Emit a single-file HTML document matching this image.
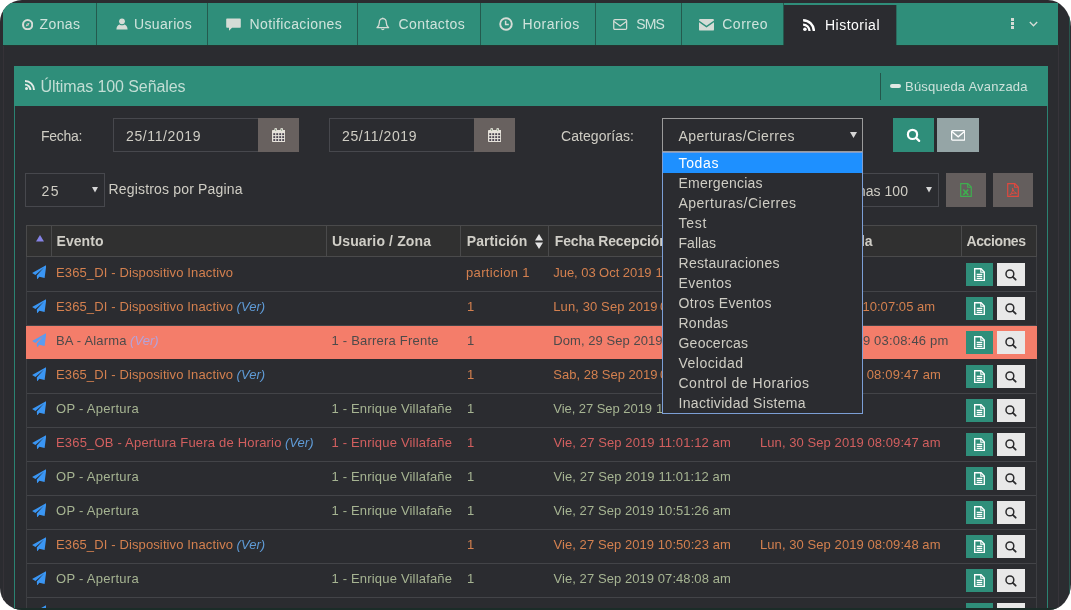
<!DOCTYPE html>
<html><head><meta charset="utf-8"><title>Historial</title>
<style>
html,body{margin:0;padding:0;background:#fff;}
body{width:1071px;height:610px;overflow:hidden;position:relative;font-family:"Liberation Sans",sans-serif;}
#f{position:absolute;left:0;top:0;width:1071px;height:610px;background:#2b2c30;border-radius:22px 23px 22px 22px / 22px 27px 26px 22px;overflow:hidden;will-change:transform;}
.r{position:absolute;display:block;}
.t{position:absolute;white-space:pre;line-height:normal;}
</style></head><body><div id="f">
<div class="r" style="left:3px;top:45px;width:1px;height:565px;background:#353237;"></div>
<div class="r" style="left:1058px;top:45px;width:1px;height:565px;background:#37343a;"></div>
<div class="r" style="left:1069px;top:0px;width:1px;height:610px;background:#27564d;"></div>
<div class="r" style="left:3px;top:3px;width:1055px;height:42px;background:#2f8e7a;"></div>
<div class="r" style="left:3px;top:45px;width:1055px;height:1px;background:#24352f;"></div>
<div class="r" style="left:96px;top:3px;width:1px;height:42px;background:#245a4e;"></div>
<div class="r" style="left:207px;top:3px;width:1px;height:42px;background:#245a4e;"></div>
<div class="r" style="left:357px;top:3px;width:1px;height:42px;background:#245a4e;"></div>
<div class="r" style="left:480px;top:3px;width:1px;height:42px;background:#245a4e;"></div>
<div class="r" style="left:595px;top:3px;width:1px;height:42px;background:#245a4e;"></div>
<div class="r" style="left:681px;top:3px;width:1px;height:42px;background:#245a4e;"></div>
<div class="r" style="left:783px;top:3px;width:1px;height:42px;background:#245a4e;"></div>
<div class="r" style="left:784px;top:5px;width:112px;height:41px;background:#2b2c30;"></div>
<div class="r" style="left:896px;top:5px;width:1px;height:40px;background:#2b6b5e;"></div>
<svg class="r" style="left:22px;top:18.7px;" width="11.3" height="11.3" viewBox="0 0 11 11"><circle cx="5.5" cy="5.5" r="4.5" fill="none" stroke="#d6dcd6" stroke-width="2"/><path d="M7.4 3.6 L6.3 6.3 L3.6 7.4 L4.7 4.7 Z" fill="#d6dcd6"/><circle cx="5.5" cy="5.5" r="0.7" fill="#c98a8a"/></svg>
<span class="t" style="left:39.50px;top:16px;font-size:14px;color:#cfe3dc;letter-spacing:0.398px;">Zonas</span>
<svg class="r" style="left:115.5px;top:18px;" width="12" height="12" viewBox="0 0 12 12"><circle cx="6" cy="3.3" r="2.9" fill="#d6dcd6"/><path d="M0.4 11.6 C0.4 8.2 2.2 6.6 3.6 6.4 C4.4 7 5.2 7.3 6 7.3 C6.8 7.3 7.6 7 8.4 6.4 C9.8 6.6 11.6 8.2 11.6 11.6 Z" fill="#d6dcd6"/></svg>
<span class="t" style="left:134.00px;top:16px;font-size:14px;color:#cfe3dc;letter-spacing:0.358px;">Usuarios</span>
<svg class="r" style="left:226px;top:18px;" width="15" height="14" viewBox="0 0 15 14"><path d="M1 0.5 H14 A0.8 0.8 0 0 1 14.8 1.3 V9 A0.8 0.8 0 0 1 14 9.8 H6 L3 12.8 V9.8 H1 A0.8 0.8 0 0 1 0.2 9 V1.3 A0.8 0.8 0 0 1 1 0.5 Z" fill="#d6dcd6"/></svg>
<span class="t" style="left:249.50px;top:16px;font-size:14px;color:#cfe3dc;letter-spacing:0.392px;">Notificaciones</span>
<svg class="r" style="left:376.2px;top:17px;" width="13.6" height="14.4" viewBox="0 0 14 14"><path d="M7 1.2 C4.6 1.2 3.4 3 3.4 5.4 C3.4 8.4 2.2 9.6 1 10.6 H13 C11.8 9.6 10.6 8.4 10.6 5.4 C10.6 3 9.4 1.2 7 1.2 Z" fill="none" stroke="#d6dcd6" stroke-width="1.3" stroke-linejoin="round"/><path d="M5.6 11.6 A1.5 1.5 0 0 0 8.4 11.6" fill="none" stroke="#d6dcd6" stroke-width="1.2"/><circle cx="7" cy="0.9" r="0.8" fill="#d6dcd6"/></svg>
<span class="t" style="left:398.50px;top:16px;font-size:14px;color:#cfe3dc;letter-spacing:0.402px;">Contactos</span>
<svg class="r" style="left:499px;top:17px;" width="14" height="14" viewBox="0 0 14 14"><circle cx="7" cy="7" r="5.8" fill="none" stroke="#d6dcd6" stroke-width="1.9"/><path d="M6.6 3.8 V7.6 H9.8" fill="none" stroke="#d6dcd6" stroke-width="1.5"/></svg>
<span class="t" style="left:522.50px;top:16px;font-size:14px;color:#cfe3dc;letter-spacing:0.549px;">Horarios</span>
<svg class="r" style="left:613.2px;top:19.3px;" width="14.4" height="11.4" viewBox="0 0 15 12"><rect x="0.7" y="0.7" width="13.6" height="10.2" rx="1.2" fill="none" stroke="#d6dcd6" stroke-width="1.3"/><path d="M1 2.6 L7.5 7.4 L14 2.6" fill="none" stroke="#d6dcd6" stroke-width="1.3"/></svg>
<span class="t" style="left:636.25px;top:16px;font-size:14px;color:#cfe3dc;letter-spacing:-0.919px;">SMS</span>
<svg class="r" style="left:699px;top:19px;" width="15" height="11.6" viewBox="0 0 15 11.6"><path d="M0 1.2 A1.2 1.2 0 0 1 1.2 0 H13.8 A1.2 1.2 0 0 1 15 1.2 V1.6 L7.5 6.8 L0 1.6 Z" fill="#d6dcd6"/><path d="M0 3.2 L7.5 8.4 L15 3.2 V10.4 A1.2 1.2 0 0 1 13.8 11.6 H1.2 A1.2 1.2 0 0 1 0 10.4 Z" fill="#d6dcd6"/></svg>
<span class="t" style="left:722.25px;top:16px;font-size:14px;color:#cfe3dc;letter-spacing:0.491px;">Correo</span>
<svg class="r" style="left:802.8px;top:18.6px;" width="12.2" height="12" viewBox="0 0 12 12"><circle cx="1.8" cy="10.2" r="1.8" fill="#ffffff"/><path d="M0 4.4 A7.6 7.6 0 0 1 7.6 12 H5.3 A5.3 5.3 0 0 0 0 6.7 Z" fill="#ffffff"/><path d="M0 0 A12 12 0 0 1 12 12 H9.6 A9.6 9.6 0 0 0 0 2.4 Z" fill="#ffffff"/></svg>
<span class="t" style="left:825.00px;top:17px;font-size:14px;color:#ffffff;letter-spacing:0.492px;">Historial</span>
<div class="r" style="left:1010.5px;top:18px;width:3px;height:3px;background:#d6dcd6;"></div>
<div class="r" style="left:1010.5px;top:22px;width:3px;height:3px;background:#d6dcd6;"></div>
<div class="r" style="left:1010.5px;top:26px;width:3px;height:3px;background:#d6dcd6;"></div>
<svg class="r" style="left:1029px;top:21px;" width="9" height="7" viewBox="0 0 9 7"><path d="M0.8 1 L4.5 4.8 L8.2 1" fill="none" stroke="#d6dcd6" stroke-width="1.3"/></svg>
<div class="r" style="left:14px;top:66px;width:1034px;height:40px;background:#2f8e7a;"></div>
<div class="r" style="left:14px;top:106px;width:1px;height:504px;background:#2b8372;"></div>
<div class="r" style="left:1047px;top:106px;width:1px;height:504px;background:#2b8372;"></div>
<svg class="r" style="left:25px;top:80px;" width="10" height="10" viewBox="0 0 12 12"><circle cx="1.8" cy="10.2" r="1.8" fill="#e3ebe6"/><path d="M0 4.4 A7.6 7.6 0 0 1 7.6 12 H5.3 A5.3 5.3 0 0 0 0 6.7 Z" fill="#e3ebe6"/><path d="M0 0 A12 12 0 0 1 12 12 H9.6 A9.6 9.6 0 0 0 0 2.4 Z" fill="#e3ebe6"/></svg>
<span class="t" style="left:40.50px;top:78px;font-size:16px;color:#c3ded5;letter-spacing:-0.097px;">Últimas 100 Señales</span>
<div class="r" style="left:880px;top:73px;width:1px;height:27px;background:#24564b;"></div>
<div class="r" style="left:890px;top:84px;width:11px;height:3.5px;background:#dfe8e3;border-radius:2px;"></div>
<span class="t" style="left:905.00px;top:79px;font-size:13px;color:#cde2db;letter-spacing:0.217px;">Búsqueda Avanzada</span>
<span class="t" style="left:41.00px;top:128px;font-size:14px;color:#cfcdc4;letter-spacing:-0.260px;">Fecha:</span>
<div class="r" style="left:113px;top:118px;width:146px;height:34px;background:#2b2c30;box-sizing:border-box;border:1px solid #47484d;"></div>
<span class="t" style="left:126.00px;top:128px;font-size:14px;color:#cfcdc4;letter-spacing:0.608px;">25/11/2019</span>
<div class="r" style="left:258px;top:118px;width:41px;height:34px;background:#68615f;"></div>
<svg class="r" style="left:271.8px;top:128px;" width="13.4" height="14" viewBox="0 0 13.4 14"><rect x="0" y="2" width="13.4" height="12" rx="0.8" fill="#e6e2da"/><rect x="2.4" y="0" width="2.6" height="3.6" rx="0.9" fill="#e6e2da"/><rect x="8.4" y="0" width="2.6" height="3.6" rx="0.9" fill="#e6e2da"/><rect x="3.3" y="0.8" width="0.8" height="2.2" fill="#7f9a7f"/><rect x="9.3" y="0.8" width="0.8" height="2.2" fill="#7f9a7f"/><rect x="1.30" y="5.20" width="1.9" height="1.9" fill="#4a4550"/><rect x="1.30" y="8.15" width="1.9" height="1.9" fill="#4a4550"/><rect x="1.30" y="11.10" width="1.9" height="1.9" fill="#4a4550"/><rect x="4.27" y="5.20" width="1.9" height="1.9" fill="#4a4550"/><rect x="4.27" y="8.15" width="1.9" height="1.9" fill="#4a4550"/><rect x="4.27" y="11.10" width="1.9" height="1.9" fill="#4a4550"/><rect x="7.24" y="5.20" width="1.9" height="1.9" fill="#4a4550"/><rect x="7.24" y="8.15" width="1.9" height="1.9" fill="#4a4550"/><rect x="7.24" y="11.10" width="1.9" height="1.9" fill="#4a4550"/><rect x="10.21" y="5.20" width="1.9" height="1.9" fill="#4a4550"/><rect x="10.21" y="8.15" width="1.9" height="1.9" fill="#4a4550"/><rect x="10.21" y="11.10" width="1.9" height="1.9" fill="#4a4550"/></svg>
<div class="r" style="left:329px;top:118px;width:146px;height:34px;background:#2b2c30;box-sizing:border-box;border:1px solid #47484d;"></div>
<span class="t" style="left:342.00px;top:128px;font-size:14px;color:#cfcdc4;letter-spacing:0.608px;">25/11/2019</span>
<div class="r" style="left:474px;top:118px;width:41px;height:34px;background:#68615f;"></div>
<svg class="r" style="left:487.8px;top:128px;" width="13.4" height="14" viewBox="0 0 13.4 14"><rect x="0" y="2" width="13.4" height="12" rx="0.8" fill="#e6e2da"/><rect x="2.4" y="0" width="2.6" height="3.6" rx="0.9" fill="#e6e2da"/><rect x="8.4" y="0" width="2.6" height="3.6" rx="0.9" fill="#e6e2da"/><rect x="3.3" y="0.8" width="0.8" height="2.2" fill="#7f9a7f"/><rect x="9.3" y="0.8" width="0.8" height="2.2" fill="#7f9a7f"/><rect x="1.30" y="5.20" width="1.9" height="1.9" fill="#4a4550"/><rect x="1.30" y="8.15" width="1.9" height="1.9" fill="#4a4550"/><rect x="1.30" y="11.10" width="1.9" height="1.9" fill="#4a4550"/><rect x="4.27" y="5.20" width="1.9" height="1.9" fill="#4a4550"/><rect x="4.27" y="8.15" width="1.9" height="1.9" fill="#4a4550"/><rect x="4.27" y="11.10" width="1.9" height="1.9" fill="#4a4550"/><rect x="7.24" y="5.20" width="1.9" height="1.9" fill="#4a4550"/><rect x="7.24" y="8.15" width="1.9" height="1.9" fill="#4a4550"/><rect x="7.24" y="11.10" width="1.9" height="1.9" fill="#4a4550"/><rect x="10.21" y="5.20" width="1.9" height="1.9" fill="#4a4550"/><rect x="10.21" y="8.15" width="1.9" height="1.9" fill="#4a4550"/><rect x="10.21" y="11.10" width="1.9" height="1.9" fill="#4a4550"/></svg>
<span class="t" style="left:561.00px;top:128px;font-size:14px;color:#cfcdc4;letter-spacing:0.063px;">Categorías:</span>
<div class="r" style="left:662px;top:118px;width:201px;height:34px;background:#2b2c30;box-sizing:border-box;border:1px solid #9b9b9b;"></div>
<span class="t" style="left:678.50px;top:128px;font-size:14px;color:#cfcdc4;letter-spacing:0.394px;">Aperturas/Cierres</span>
<svg class="r" style="left:850px;top:132px;" width="7" height="6" viewBox="0 0 7 6"><path d="M0 0 H7 L3.5 6 Z" fill="#d6d6d6"/></svg>
<div class="r" style="left:893px;top:118px;width:41px;height:34px;background:#2f8e7a;"></div>
<svg class="r" style="left:900px;top:122px;" width="26" height="26" viewBox="0 0 26 26"><circle cx="12.5" cy="12.4" r="4.6" fill="none" stroke="#fff" stroke-width="2.2"/><path d="M16 15.9 L19.2 18.9" stroke="#fff" stroke-width="2.2" stroke-linecap="round"/></svg>
<div class="r" style="left:937px;top:118px;width:42px;height:34px;background:#95a5a6;"></div>
<svg class="r" style="left:950.8px;top:130px;" width="14.4" height="10.8" viewBox="0 0 14.4 10.8"><rect x="0.65" y="0.65" width="13.1" height="9.5" rx="0.8" fill="none" stroke="#fff" stroke-width="1.3"/><path d="M0.9 1.6 L7.2 6.8 L13.5 1.6" fill="none" stroke="#fff" stroke-width="1.3"/></svg>
<div class="r" style="left:25px;top:173px;width:80px;height:34px;background:#2b2c30;box-sizing:border-box;border:1px solid #47484d;"></div>
<span class="t" style="left:41.50px;top:183px;font-size:14px;color:#cfcdc4;letter-spacing:1.428px;">25</span>
<svg class="r" style="left:92px;top:187px;" width="6" height="5.5" viewBox="0 0 6 5.5"><path d="M0 0 H6 L3 5.5 Z" fill="#d6d6d6"/></svg>
<span class="t" style="left:108.50px;top:181px;font-size:14px;color:#cfcdc4;letter-spacing:0.172px;">Registros por Pagina</span>
<div class="r" style="left:780px;top:173px;width:159px;height:34px;background:#2b2c30;box-sizing:border-box;border:1px solid #47484d;"></div>
<span class="t" style="left:833.50px;top:183px;font-size:14px;color:#cfcdc4;letter-spacing:0.058px;">Últimas 100</span>
<svg class="r" style="left:926px;top:187px;" width="6" height="5.5" viewBox="0 0 6 5.5"><path d="M0 0 H6 L3 5.5 Z" fill="#d6d6d6"/></svg>
<div class="r" style="left:946px;top:173px;width:40px;height:34px;background:#645e5d;"></div>
<div class="r" style="left:993px;top:173px;width:40px;height:34px;background:#645e5d;"></div>
<svg class="r" style="left:960px;top:183px;" width="12" height="14" viewBox="0 0 11 13"><path d="M0.6 0.6 H7.2 L10.4 3.8 V12.4 H0.6 Z" fill="none" stroke="#3fae4f" stroke-width="1.1"/><path d="M7 0.8 V4 H10.2" fill="none" stroke="#3fae4f" stroke-width="1"/><path d="M3 6 L7.6 11 M7.6 6 L3 11" stroke="#3fae4f" stroke-width="1.5"/></svg>
<svg class="r" style="left:1007px;top:183px;" width="12" height="14" viewBox="0 0 11 13"><path d="M0.6 0.6 H7.2 L10.4 3.8 V12.4 H0.6 Z" fill="none" stroke="#e0483f" stroke-width="1.1"/><path d="M7 0.8 V4 H10.2" fill="none" stroke="#e0483f" stroke-width="1"/><path d="M5 4.6 C5.6 7 4.4 9.6 2.6 11 C4.4 9.6 7 9 8.8 9.6 C7 9 5.6 7 5 4.6 Z" fill="none" stroke="#e0483f" stroke-width="0.9"/></svg>
<div class="r" style="left:26px;top:225px;width:1011px;height:32px;background:#303030;box-sizing:border-box;border:1px solid #4a4a4b;"></div>
<div class="r" style="left:51px;top:226px;width:1px;height:30px;background:#4a4a4b;"></div>
<div class="r" style="left:326px;top:226px;width:1px;height:30px;background:#4a4a4b;"></div>
<div class="r" style="left:460px;top:226px;width:1px;height:30px;background:#4a4a4b;"></div>
<div class="r" style="left:548px;top:226px;width:1px;height:30px;background:#4a4a4b;"></div>
<div class="r" style="left:961px;top:226px;width:1px;height:30px;background:#4a4a4b;"></div>
<div class="r" style="left:26px;top:257px;width:1px;height:353px;background:#3d3e42;"></div>
<div class="r" style="left:1036px;top:257px;width:1px;height:353px;background:#3d3e42;"></div>
<svg class="r" style="left:36px;top:235px;" width="8" height="6.5" viewBox="0 0 8 6.5"><path d="M4 0 L8 6.5 H0 Z" fill="#8583e6"/></svg>
<span class="t" style="left:56.50px;top:233px;font-size:14px;color:#d0cec7;letter-spacing:0.065px;font-weight:700;">Evento</span>
<span class="t" style="left:332.00px;top:233px;font-size:14px;color:#d0cec7;letter-spacing:0.136px;font-weight:700;">Usuario / Zona</span>
<span class="t" style="left:466.75px;top:233px;font-size:14px;color:#d0cec7;letter-spacing:0.075px;font-weight:700;">Partición</span>
<svg class="r" style="left:534.5px;top:234px;" width="8" height="15" viewBox="0 0 8 15"><path d="M4 0 L8 6.4 H0 Z M0 8.6 H8 L4 15 Z" fill="#e4e4e4"/></svg>
<span class="t" style="left:554.75px;top:233px;font-size:14px;color:#d0cec7;letter-spacing:-0.153px;font-weight:700;">Fecha Recepción</span>
<span class="t" style="left:769.50px;top:233px;font-size:14px;color:#d0cec7;letter-spacing:-0.055px;font-weight:700;">Fecha Atendida</span>
<span class="t" style="left:966.50px;top:233px;font-size:14px;color:#d0cec7;letter-spacing:-0.392px;font-weight:700;">Acciones</span>
<div class="r" style="left:27px;top:291px;width:1009px;height:1px;background:#434448;"></div>
<svg class="r" style="left:31.5px;top:264.5px;" width="14.5" height="14.5" viewBox="0 0 14.5 14.5"><path d="M14.3 0.2 L0.1 8.1 L3.4 10.1 L12 2.6 L4.8 10.4 L5.1 14.4 L7.4 11.8 L12.6 13 Z" fill="#3a96f4"/></svg>
<span class="t" style="left:56.00px;top:265px;font-size:13px;color:#d4804f;letter-spacing:0.124px;">E365_DI - Dispositivo Inactivo</span>
<span class="t" style="left:466.00px;top:265px;font-size:13px;color:#d4804f;letter-spacing:0.352px;">particion 1</span>
<span class="t" style="left:553.25px;top:265px;font-size:13px;color:#d4804f;letter-spacing:-0.048px;">Jue, 03 Oct 2019</span>
<span class="t" style="left:655.50px;top:265px;font-size:13px;color:#d4804f;letter-spacing:0.072px;">10:12:41 am</span>
<div class="r" style="left:966px;top:263px;width:27px;height:23px;background:#2f8e7a;"></div>
<svg class="r" style="left:974px;top:268px;" width="11" height="13" viewBox="0 0 11 13"><path d="M0.7 0.7 H7 L10.3 4 V12.3 H0.7 Z" fill="none" stroke="#ffffff" stroke-width="1.35"/><path d="M6.8 0.8 V4.2 H10.2" fill="none" stroke="#ffffff" stroke-width="1.1"/><path d="M2.7 6.3 H8.3 M2.7 8.3 H8.3 M2.7 10.3 H8.3" stroke="#ffffff" stroke-width="1.2"/></svg>
<div class="r" style="left:997px;top:263px;width:28px;height:23px;background:#e8e8e8;"></div>
<svg class="r" style="left:1005px;top:269px;" width="11.5" height="11.5" viewBox="0 0 11.5 11.5"><circle cx="4.9" cy="4.9" r="3.9" fill="none" stroke="#2b2b2d" stroke-width="1.5"/><path d="M7.8 7.8 L10.7 10.7" stroke="#2b2b2d" stroke-width="1.8" stroke-linecap="round"/></svg>
<div class="r" style="left:27px;top:325px;width:1009px;height:1px;background:#434448;"></div>
<svg class="r" style="left:31.5px;top:298.5px;" width="14.5" height="14.5" viewBox="0 0 14.5 14.5"><path d="M14.3 0.2 L0.1 8.1 L3.4 10.1 L12 2.6 L4.8 10.4 L5.1 14.4 L7.4 11.8 L12.6 13 Z" fill="#3a96f4"/></svg>
<span class="t" style="left:56.00px;top:299px;font-size:13px;color:#d4804f;letter-spacing:0.124px;">E365_DI - Dispositivo Inactivo</span>
<span class="t" style="left:236.50px;top:299px;font-size:13px;color:#5f9bd6;letter-spacing:0.073px;font-style:italic;">(Ver)</span>
<span class="t" style="left:467.00px;top:299px;font-size:13px;color:#d4804f;">1</span>
<span class="t" style="left:553.25px;top:299px;font-size:13px;color:#d4804f;letter-spacing:0.110px;">Lun, 30 Sep 2019</span>
<span class="t" style="left:660.00px;top:299px;font-size:13px;color:#d4804f;letter-spacing:0.172px;">08:09:47 am</span>
<span class="t" style="left:760.00px;top:299px;font-size:13px;color:#d4804f;letter-spacing:-0.048px;">Mar, 01 Oct 2019</span>
<span class="t" style="left:862.40px;top:299px;font-size:13px;color:#d4804f;letter-spacing:0.052px;">10:07:05 am</span>
<div class="r" style="left:966px;top:297px;width:27px;height:23px;background:#2f8e7a;"></div>
<svg class="r" style="left:974px;top:302px;" width="11" height="13" viewBox="0 0 11 13"><path d="M0.7 0.7 H7 L10.3 4 V12.3 H0.7 Z" fill="none" stroke="#ffffff" stroke-width="1.35"/><path d="M6.8 0.8 V4.2 H10.2" fill="none" stroke="#ffffff" stroke-width="1.1"/><path d="M2.7 6.3 H8.3 M2.7 8.3 H8.3 M2.7 10.3 H8.3" stroke="#ffffff" stroke-width="1.2"/></svg>
<div class="r" style="left:997px;top:297px;width:28px;height:23px;background:#e8e8e8;"></div>
<svg class="r" style="left:1005px;top:303px;" width="11.5" height="11.5" viewBox="0 0 11.5 11.5"><circle cx="4.9" cy="4.9" r="3.9" fill="none" stroke="#2b2b2d" stroke-width="1.5"/><path d="M7.8 7.8 L10.7 10.7" stroke="#2b2b2d" stroke-width="1.8" stroke-linecap="round"/></svg>
<div class="r" style="left:26px;top:326px;width:1011px;height:33px;background:#f47d6a;"></div>
<svg class="r" style="left:31.5px;top:332.5px;" width="14.5" height="14.5" viewBox="0 0 14.5 14.5"><path d="M14.3 0.2 L0.1 8.1 L3.4 10.1 L12 2.6 L4.8 10.4 L5.1 14.4 L7.4 11.8 L12.6 13 Z" fill="#5b9cf0"/></svg>
<span class="t" style="left:56.00px;top:333px;font-size:13px;color:#4d4a4a;letter-spacing:0.186px;">BA - Alarma</span>
<span class="t" style="left:130.00px;top:333px;font-size:13px;color:#b3a3dc;letter-spacing:0.073px;font-style:italic;">(Ver)</span>
<span class="t" style="left:331.50px;top:333px;font-size:13px;color:#4d4a4a;letter-spacing:0.217px;">1 - Barrera Frente</span>
<span class="t" style="left:467.00px;top:333px;font-size:13px;color:#4d4a4a;">1</span>
<span class="t" style="left:553.25px;top:333px;font-size:13px;color:#4d4a4a;letter-spacing:0.060px;">Dom, 29 Sep 2019</span>
<span class="t" style="left:760.00px;top:333px;font-size:13px;color:#4d4a4a;letter-spacing:-0.298px;">Dom, 29 Sep 201</span>
<span class="t" style="left:862.90px;top:333px;font-size:13px;color:#4d4a4a;letter-spacing:0.190px;">9 03:08:46 pm</span>
<div class="r" style="left:966px;top:331px;width:27px;height:23px;background:#2f8e7a;"></div>
<svg class="r" style="left:974px;top:336px;" width="11" height="13" viewBox="0 0 11 13"><path d="M0.7 0.7 H7 L10.3 4 V12.3 H0.7 Z" fill="none" stroke="#ffffff" stroke-width="1.35"/><path d="M6.8 0.8 V4.2 H10.2" fill="none" stroke="#ffffff" stroke-width="1.1"/><path d="M2.7 6.3 H8.3 M2.7 8.3 H8.3 M2.7 10.3 H8.3" stroke="#ffffff" stroke-width="1.2"/></svg>
<div class="r" style="left:997px;top:331px;width:28px;height:23px;background:#e8e8e8;"></div>
<svg class="r" style="left:1005px;top:337px;" width="11.5" height="11.5" viewBox="0 0 11.5 11.5"><circle cx="4.9" cy="4.9" r="3.9" fill="none" stroke="#2b2b2d" stroke-width="1.5"/><path d="M7.8 7.8 L10.7 10.7" stroke="#2b2b2d" stroke-width="1.8" stroke-linecap="round"/></svg>
<div class="r" style="left:27px;top:393px;width:1009px;height:1px;background:#434448;"></div>
<svg class="r" style="left:31.5px;top:366.5px;" width="14.5" height="14.5" viewBox="0 0 14.5 14.5"><path d="M14.3 0.2 L0.1 8.1 L3.4 10.1 L12 2.6 L4.8 10.4 L5.1 14.4 L7.4 11.8 L12.6 13 Z" fill="#3a96f4"/></svg>
<span class="t" style="left:56.00px;top:367px;font-size:13px;color:#d4804f;letter-spacing:0.124px;">E365_DI - Dispositivo Inactivo</span>
<span class="t" style="left:236.50px;top:367px;font-size:13px;color:#5f9bd6;letter-spacing:0.073px;font-style:italic;">(Ver)</span>
<span class="t" style="left:467.00px;top:367px;font-size:13px;color:#d4804f;">1</span>
<span class="t" style="left:553.25px;top:367px;font-size:13px;color:#d4804f;letter-spacing:0.014px;">Sab, 28 Sep 2019</span>
<span class="t" style="left:660.00px;top:367px;font-size:13px;color:#d4804f;letter-spacing:0.172px;">08:09:47 am</span>
<span class="t" style="left:760.00px;top:367px;font-size:13px;color:#d4804f;letter-spacing:0.024px;">Lun, 30 Sep 2019</span>
<span class="t" style="left:866.70px;top:367px;font-size:13px;color:#d4804f;letter-spacing:0.192px;">08:09:47 am</span>
<div class="r" style="left:966px;top:365px;width:27px;height:23px;background:#2f8e7a;"></div>
<svg class="r" style="left:974px;top:370px;" width="11" height="13" viewBox="0 0 11 13"><path d="M0.7 0.7 H7 L10.3 4 V12.3 H0.7 Z" fill="none" stroke="#ffffff" stroke-width="1.35"/><path d="M6.8 0.8 V4.2 H10.2" fill="none" stroke="#ffffff" stroke-width="1.1"/><path d="M2.7 6.3 H8.3 M2.7 8.3 H8.3 M2.7 10.3 H8.3" stroke="#ffffff" stroke-width="1.2"/></svg>
<div class="r" style="left:997px;top:365px;width:28px;height:23px;background:#e8e8e8;"></div>
<svg class="r" style="left:1005px;top:371px;" width="11.5" height="11.5" viewBox="0 0 11.5 11.5"><circle cx="4.9" cy="4.9" r="3.9" fill="none" stroke="#2b2b2d" stroke-width="1.5"/><path d="M7.8 7.8 L10.7 10.7" stroke="#2b2b2d" stroke-width="1.8" stroke-linecap="round"/></svg>
<div class="r" style="left:27px;top:427px;width:1009px;height:1px;background:#434448;"></div>
<svg class="r" style="left:31.5px;top:400.5px;" width="14.5" height="14.5" viewBox="0 0 14.5 14.5"><path d="M14.3 0.2 L0.1 8.1 L3.4 10.1 L12 2.6 L4.8 10.4 L5.1 14.4 L7.4 11.8 L12.6 13 Z" fill="#3a96f4"/></svg>
<span class="t" style="left:56.00px;top:401px;font-size:13px;color:#a6b492;letter-spacing:0.288px;">OP - Apertura</span>
<span class="t" style="left:331.50px;top:401px;font-size:13px;color:#a6b492;letter-spacing:0.183px;">1 - Enrique Villafañe</span>
<span class="t" style="left:467.00px;top:401px;font-size:13px;color:#a6b492;">1</span>
<span class="t" style="left:553.25px;top:401px;font-size:13px;color:#a6b492;letter-spacing:-0.047px;">Vie, 27 Sep 2019</span>
<span class="t" style="left:656.10px;top:401px;font-size:13px;color:#a6b492;letter-spacing:0.169px;">11:10:12 am</span>
<div class="r" style="left:966px;top:399px;width:27px;height:23px;background:#2f8e7a;"></div>
<svg class="r" style="left:974px;top:404px;" width="11" height="13" viewBox="0 0 11 13"><path d="M0.7 0.7 H7 L10.3 4 V12.3 H0.7 Z" fill="none" stroke="#ffffff" stroke-width="1.35"/><path d="M6.8 0.8 V4.2 H10.2" fill="none" stroke="#ffffff" stroke-width="1.1"/><path d="M2.7 6.3 H8.3 M2.7 8.3 H8.3 M2.7 10.3 H8.3" stroke="#ffffff" stroke-width="1.2"/></svg>
<div class="r" style="left:997px;top:399px;width:28px;height:23px;background:#e8e8e8;"></div>
<svg class="r" style="left:1005px;top:405px;" width="11.5" height="11.5" viewBox="0 0 11.5 11.5"><circle cx="4.9" cy="4.9" r="3.9" fill="none" stroke="#2b2b2d" stroke-width="1.5"/><path d="M7.8 7.8 L10.7 10.7" stroke="#2b2b2d" stroke-width="1.8" stroke-linecap="round"/></svg>
<div class="r" style="left:27px;top:461px;width:1009px;height:1px;background:#434448;"></div>
<svg class="r" style="left:31.5px;top:434.5px;" width="14.5" height="14.5" viewBox="0 0 14.5 14.5"><path d="M14.3 0.2 L0.1 8.1 L3.4 10.1 L12 2.6 L4.8 10.4 L5.1 14.4 L7.4 11.8 L12.6 13 Z" fill="#3a96f4"/></svg>
<span class="t" style="left:56.00px;top:435px;font-size:13px;color:#d25f5f;letter-spacing:0.190px;">E365_OB - Apertura Fuera de Horario</span>
<span class="t" style="left:284.90px;top:435px;font-size:13px;color:#5f9bd6;letter-spacing:0.073px;font-style:italic;">(Ver)</span>
<span class="t" style="left:331.50px;top:435px;font-size:13px;color:#d25f5f;letter-spacing:0.183px;">1 - Enrique Villafañe</span>
<span class="t" style="left:467.00px;top:435px;font-size:13px;color:#d25f5f;">1</span>
<span class="t" style="left:553.50px;top:435px;font-size:13px;color:#d25f5f;letter-spacing:0.104px;">Vie, 27 Sep 2019 11:01:12 am</span>
<span class="t" style="left:760.00px;top:435px;font-size:13px;color:#d25f5f;letter-spacing:0.073px;">Lun, 30 Sep 2019 08:09:47 am</span>
<div class="r" style="left:966px;top:433px;width:27px;height:23px;background:#2f8e7a;"></div>
<svg class="r" style="left:974px;top:438px;" width="11" height="13" viewBox="0 0 11 13"><path d="M0.7 0.7 H7 L10.3 4 V12.3 H0.7 Z" fill="none" stroke="#ffffff" stroke-width="1.35"/><path d="M6.8 0.8 V4.2 H10.2" fill="none" stroke="#ffffff" stroke-width="1.1"/><path d="M2.7 6.3 H8.3 M2.7 8.3 H8.3 M2.7 10.3 H8.3" stroke="#ffffff" stroke-width="1.2"/></svg>
<div class="r" style="left:997px;top:433px;width:28px;height:23px;background:#e8e8e8;"></div>
<svg class="r" style="left:1005px;top:439px;" width="11.5" height="11.5" viewBox="0 0 11.5 11.5"><circle cx="4.9" cy="4.9" r="3.9" fill="none" stroke="#2b2b2d" stroke-width="1.5"/><path d="M7.8 7.8 L10.7 10.7" stroke="#2b2b2d" stroke-width="1.8" stroke-linecap="round"/></svg>
<div class="r" style="left:27px;top:495px;width:1009px;height:1px;background:#434448;"></div>
<svg class="r" style="left:31.5px;top:468.5px;" width="14.5" height="14.5" viewBox="0 0 14.5 14.5"><path d="M14.3 0.2 L0.1 8.1 L3.4 10.1 L12 2.6 L4.8 10.4 L5.1 14.4 L7.4 11.8 L12.6 13 Z" fill="#3a96f4"/></svg>
<span class="t" style="left:56.00px;top:469px;font-size:13px;color:#a6b492;letter-spacing:0.288px;">OP - Apertura</span>
<span class="t" style="left:331.50px;top:469px;font-size:13px;color:#a6b492;letter-spacing:0.183px;">1 - Enrique Villafañe</span>
<span class="t" style="left:467.00px;top:469px;font-size:13px;color:#a6b492;">1</span>
<span class="t" style="left:553.50px;top:469px;font-size:13px;color:#a6b492;letter-spacing:0.104px;">Vie, 27 Sep 2019 11:01:12 am</span>
<div class="r" style="left:966px;top:467px;width:27px;height:23px;background:#2f8e7a;"></div>
<svg class="r" style="left:974px;top:472px;" width="11" height="13" viewBox="0 0 11 13"><path d="M0.7 0.7 H7 L10.3 4 V12.3 H0.7 Z" fill="none" stroke="#ffffff" stroke-width="1.35"/><path d="M6.8 0.8 V4.2 H10.2" fill="none" stroke="#ffffff" stroke-width="1.1"/><path d="M2.7 6.3 H8.3 M2.7 8.3 H8.3 M2.7 10.3 H8.3" stroke="#ffffff" stroke-width="1.2"/></svg>
<div class="r" style="left:997px;top:467px;width:28px;height:23px;background:#e8e8e8;"></div>
<svg class="r" style="left:1005px;top:473px;" width="11.5" height="11.5" viewBox="0 0 11.5 11.5"><circle cx="4.9" cy="4.9" r="3.9" fill="none" stroke="#2b2b2d" stroke-width="1.5"/><path d="M7.8 7.8 L10.7 10.7" stroke="#2b2b2d" stroke-width="1.8" stroke-linecap="round"/></svg>
<div class="r" style="left:27px;top:529px;width:1009px;height:1px;background:#434448;"></div>
<svg class="r" style="left:31.5px;top:502.5px;" width="14.5" height="14.5" viewBox="0 0 14.5 14.5"><path d="M14.3 0.2 L0.1 8.1 L3.4 10.1 L12 2.6 L4.8 10.4 L5.1 14.4 L7.4 11.8 L12.6 13 Z" fill="#3a96f4"/></svg>
<span class="t" style="left:56.00px;top:503px;font-size:13px;color:#a6b492;letter-spacing:0.288px;">OP - Apertura</span>
<span class="t" style="left:331.50px;top:503px;font-size:13px;color:#a6b492;letter-spacing:0.183px;">1 - Enrique Villafañe</span>
<span class="t" style="left:467.00px;top:503px;font-size:13px;color:#a6b492;">1</span>
<span class="t" style="left:553.50px;top:503px;font-size:13px;color:#a6b492;letter-spacing:0.069px;">Vie, 27 Sep 2019 10:51:26 am</span>
<div class="r" style="left:966px;top:501px;width:27px;height:23px;background:#2f8e7a;"></div>
<svg class="r" style="left:974px;top:506px;" width="11" height="13" viewBox="0 0 11 13"><path d="M0.7 0.7 H7 L10.3 4 V12.3 H0.7 Z" fill="none" stroke="#ffffff" stroke-width="1.35"/><path d="M6.8 0.8 V4.2 H10.2" fill="none" stroke="#ffffff" stroke-width="1.1"/><path d="M2.7 6.3 H8.3 M2.7 8.3 H8.3 M2.7 10.3 H8.3" stroke="#ffffff" stroke-width="1.2"/></svg>
<div class="r" style="left:997px;top:501px;width:28px;height:23px;background:#e8e8e8;"></div>
<svg class="r" style="left:1005px;top:507px;" width="11.5" height="11.5" viewBox="0 0 11.5 11.5"><circle cx="4.9" cy="4.9" r="3.9" fill="none" stroke="#2b2b2d" stroke-width="1.5"/><path d="M7.8 7.8 L10.7 10.7" stroke="#2b2b2d" stroke-width="1.8" stroke-linecap="round"/></svg>
<div class="r" style="left:27px;top:563px;width:1009px;height:1px;background:#434448;"></div>
<svg class="r" style="left:31.5px;top:536.5px;" width="14.5" height="14.5" viewBox="0 0 14.5 14.5"><path d="M14.3 0.2 L0.1 8.1 L3.4 10.1 L12 2.6 L4.8 10.4 L5.1 14.4 L7.4 11.8 L12.6 13 Z" fill="#3a96f4"/></svg>
<span class="t" style="left:56.00px;top:537px;font-size:13px;color:#d4804f;letter-spacing:0.124px;">E365_DI - Dispositivo Inactivo</span>
<span class="t" style="left:236.50px;top:537px;font-size:13px;color:#5f9bd6;letter-spacing:0.073px;font-style:italic;">(Ver)</span>
<span class="t" style="left:467.00px;top:537px;font-size:13px;color:#d4804f;">1</span>
<span class="t" style="left:553.50px;top:537px;font-size:13px;color:#d4804f;letter-spacing:0.069px;">Vie, 27 Sep 2019 10:50:23 am</span>
<span class="t" style="left:760.00px;top:537px;font-size:13px;color:#d4804f;letter-spacing:0.073px;">Lun, 30 Sep 2019 08:09:48 am</span>
<div class="r" style="left:966px;top:535px;width:27px;height:23px;background:#2f8e7a;"></div>
<svg class="r" style="left:974px;top:540px;" width="11" height="13" viewBox="0 0 11 13"><path d="M0.7 0.7 H7 L10.3 4 V12.3 H0.7 Z" fill="none" stroke="#ffffff" stroke-width="1.35"/><path d="M6.8 0.8 V4.2 H10.2" fill="none" stroke="#ffffff" stroke-width="1.1"/><path d="M2.7 6.3 H8.3 M2.7 8.3 H8.3 M2.7 10.3 H8.3" stroke="#ffffff" stroke-width="1.2"/></svg>
<div class="r" style="left:997px;top:535px;width:28px;height:23px;background:#e8e8e8;"></div>
<svg class="r" style="left:1005px;top:541px;" width="11.5" height="11.5" viewBox="0 0 11.5 11.5"><circle cx="4.9" cy="4.9" r="3.9" fill="none" stroke="#2b2b2d" stroke-width="1.5"/><path d="M7.8 7.8 L10.7 10.7" stroke="#2b2b2d" stroke-width="1.8" stroke-linecap="round"/></svg>
<div class="r" style="left:27px;top:597px;width:1009px;height:1px;background:#434448;"></div>
<svg class="r" style="left:31.5px;top:570.5px;" width="14.5" height="14.5" viewBox="0 0 14.5 14.5"><path d="M14.3 0.2 L0.1 8.1 L3.4 10.1 L12 2.6 L4.8 10.4 L5.1 14.4 L7.4 11.8 L12.6 13 Z" fill="#3a96f4"/></svg>
<span class="t" style="left:56.00px;top:571px;font-size:13px;color:#a6b492;letter-spacing:0.288px;">OP - Apertura</span>
<span class="t" style="left:331.50px;top:571px;font-size:13px;color:#a6b492;letter-spacing:0.183px;">1 - Enrique Villafañe</span>
<span class="t" style="left:467.00px;top:571px;font-size:13px;color:#a6b492;">1</span>
<span class="t" style="left:553.50px;top:571px;font-size:13px;color:#a6b492;letter-spacing:0.069px;">Vie, 27 Sep 2019 07:48:08 am</span>
<div class="r" style="left:966px;top:569px;width:27px;height:23px;background:#2f8e7a;"></div>
<svg class="r" style="left:974px;top:574px;" width="11" height="13" viewBox="0 0 11 13"><path d="M0.7 0.7 H7 L10.3 4 V12.3 H0.7 Z" fill="none" stroke="#ffffff" stroke-width="1.35"/><path d="M6.8 0.8 V4.2 H10.2" fill="none" stroke="#ffffff" stroke-width="1.1"/><path d="M2.7 6.3 H8.3 M2.7 8.3 H8.3 M2.7 10.3 H8.3" stroke="#ffffff" stroke-width="1.2"/></svg>
<div class="r" style="left:997px;top:569px;width:28px;height:23px;background:#e8e8e8;"></div>
<svg class="r" style="left:1005px;top:575px;" width="11.5" height="11.5" viewBox="0 0 11.5 11.5"><circle cx="4.9" cy="4.9" r="3.9" fill="none" stroke="#2b2b2d" stroke-width="1.5"/><path d="M7.8 7.8 L10.7 10.7" stroke="#2b2b2d" stroke-width="1.8" stroke-linecap="round"/></svg>
<div class="r" style="left:27px;top:631px;width:1009px;height:1px;background:#434448;"></div>
<svg class="r" style="left:31.5px;top:604.5px;" width="14.5" height="14.5" viewBox="0 0 14.5 14.5"><path d="M14.3 0.2 L0.1 8.1 L3.4 10.1 L12 2.6 L4.8 10.4 L5.1 14.4 L7.4 11.8 L12.6 13 Z" fill="#3a96f4"/></svg>
<span class="t" style="left:56.00px;top:605px;font-size:13px;color:#a6b492;letter-spacing:0.288px;">OP - Apertura</span>
<span class="t" style="left:331.50px;top:605px;font-size:13px;color:#a6b492;letter-spacing:0.183px;">1 - Enrique Villafañe</span>
<span class="t" style="left:467.00px;top:605px;font-size:13px;color:#a6b492;">1</span>
<span class="t" style="left:553.50px;top:605px;font-size:13px;color:#a6b492;letter-spacing:0.104px;">Vie, 27 Sep 2019 07:30:11 am</span>
<div class="r" style="left:966px;top:603px;width:27px;height:23px;background:#2f8e7a;"></div>
<svg class="r" style="left:974px;top:608px;" width="11" height="13" viewBox="0 0 11 13"><path d="M0.7 0.7 H7 L10.3 4 V12.3 H0.7 Z" fill="none" stroke="#ffffff" stroke-width="1.35"/><path d="M6.8 0.8 V4.2 H10.2" fill="none" stroke="#ffffff" stroke-width="1.1"/><path d="M2.7 6.3 H8.3 M2.7 8.3 H8.3 M2.7 10.3 H8.3" stroke="#ffffff" stroke-width="1.2"/></svg>
<div class="r" style="left:997px;top:603px;width:28px;height:23px;background:#e8e8e8;"></div>
<svg class="r" style="left:1005px;top:609px;" width="11.5" height="11.5" viewBox="0 0 11.5 11.5"><circle cx="4.9" cy="4.9" r="3.9" fill="none" stroke="#2b2b2d" stroke-width="1.5"/><path d="M7.8 7.8 L10.7 10.7" stroke="#2b2b2d" stroke-width="1.8" stroke-linecap="round"/></svg>
<div class="r" style="left:0px;top:608px;width:1071px;height:2px;background:#1b2c28;"></div>
<div class="r" style="left:662px;top:152px;width:201px;height:262px;background:#2b2c30;box-sizing:border-box;border:1px solid #7c9fd6;"></div>
<div class="r" style="left:663px;top:153px;width:199px;height:20px;background:#1e90ff;"></div>
<span class="t" style="left:678.50px;top:155px;font-size:14px;color:#ffffff;letter-spacing:0.661px;">Todas</span>
<span class="t" style="left:678.50px;top:175px;font-size:14px;color:#cfcdc4;letter-spacing:0.230px;">Emergencias</span>
<span class="t" style="left:678.50px;top:195px;font-size:14px;color:#cfcdc4;letter-spacing:0.487px;">Aperturas/Cierres</span>
<span class="t" style="left:678.50px;top:215px;font-size:14px;color:#cfcdc4;letter-spacing:0.775px;">Test</span>
<span class="t" style="left:678.50px;top:235px;font-size:14px;color:#cfcdc4;letter-spacing:0.031px;">Fallas</span>
<span class="t" style="left:678.50px;top:255px;font-size:14px;color:#cfcdc4;letter-spacing:0.287px;">Restauraciones</span>
<span class="t" style="left:678.50px;top:275px;font-size:14px;color:#cfcdc4;letter-spacing:0.403px;">Eventos</span>
<span class="t" style="left:678.50px;top:295px;font-size:14px;color:#cfcdc4;letter-spacing:0.358px;">Otros Eventos</span>
<span class="t" style="left:678.50px;top:315px;font-size:14px;color:#cfcdc4;letter-spacing:0.249px;">Rondas</span>
<span class="t" style="left:678.50px;top:335px;font-size:14px;color:#cfcdc4;letter-spacing:0.226px;">Geocercas</span>
<span class="t" style="left:678.50px;top:355px;font-size:14px;color:#cfcdc4;letter-spacing:0.473px;">Velocidad</span>
<span class="t" style="left:678.50px;top:375px;font-size:14px;color:#cfcdc4;letter-spacing:0.506px;">Control de Horarios</span>
<span class="t" style="left:678.50px;top:395px;font-size:14px;color:#cfcdc4;letter-spacing:0.312px;">Inactividad Sistema</span>
</div></body></html>
